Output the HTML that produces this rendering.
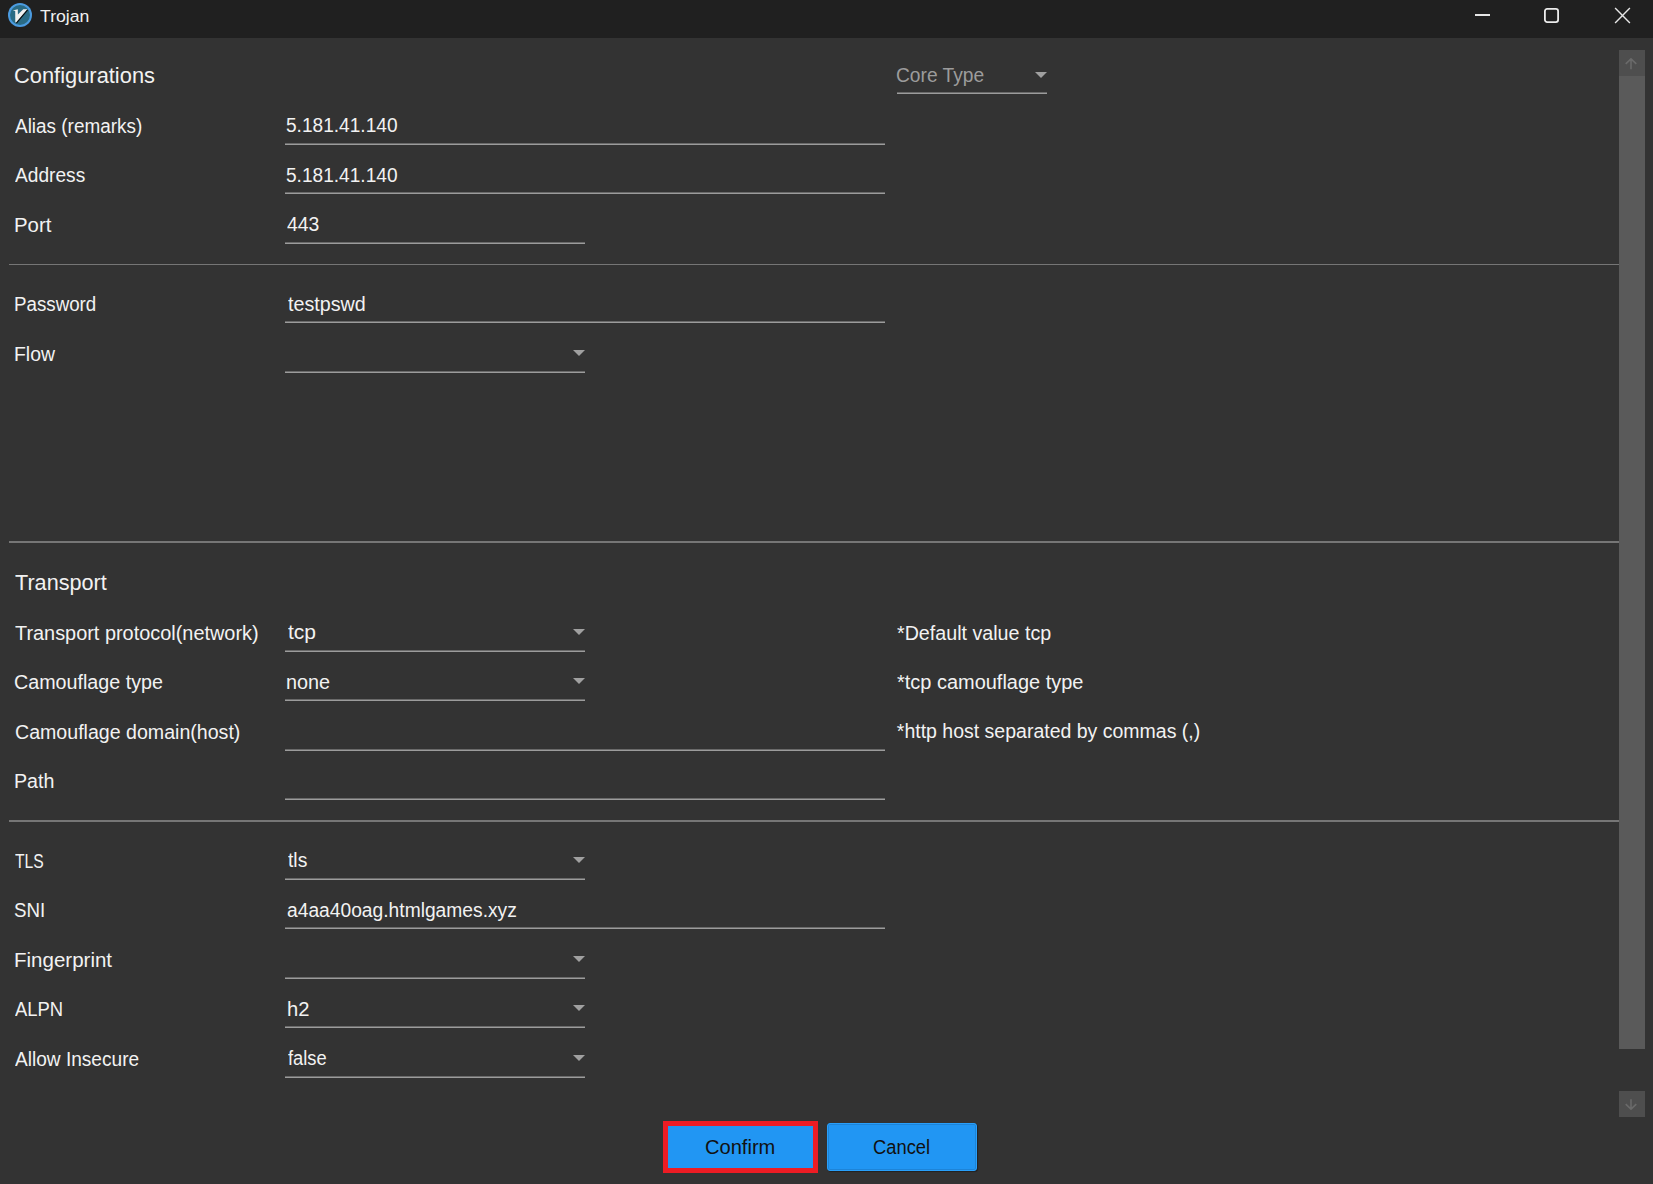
<!DOCTYPE html>
<html><head><meta charset="utf-8"><title>Trojan</title>
<style>
html,body{margin:0;padding:0;}
body{width:1653px;height:1184px;background:#333333;position:relative;overflow:hidden;font-family:"Liberation Sans",sans-serif;}
.t{position:absolute;white-space:nowrap;font-family:"Liberation Sans",sans-serif;}
.r{position:absolute;}
</style></head><body>
<div class="r" style="left:0px;top:0px;width:1653px;height:38px;background:#202020;"></div>
<svg class="r" style="left:0;top:0" width="40" height="38" viewBox="0 0 40 38">
<circle cx="20" cy="15" r="12" fill="#4b9be0"/>
<circle cx="20" cy="15" r="10" fill="#2a6b85"/>
<path d="M12.8 10.5 L17.8 9.2 L17.9 14.6 L23.3 9.2 L27.4 9.2 L16.2 22.6 L15.3 22.3 L15.2 11 Z" fill="#f0f0f0"/>
<path d="M27.6 9.9 L16.4 23.1" stroke="#0c0c0c" stroke-width="1.1"/>
</svg>
<div class="r" style="left:1475px;top:14.4px;width:15px;height:1.4px;background:#e6e6e6;"></div>
<svg class="r" style="left:1543px;top:7px" width="17" height="17" viewBox="0 0 17 17"><rect x="1.9" y="1.9" width="13.2" height="13.2" rx="2.3" fill="none" stroke="#ececec" stroke-width="1.8"/></svg>
<svg class="r" style="left:1612px;top:5px" width="22" height="22" viewBox="0 0 22 22">
<path d="M3.1 3.1L17.9 17.9M17.9 3.1L3.1 17.9" stroke="#e6e6e6" stroke-width="1.4"/></svg>
<div class="r" style="left:1619px;top:50px;width:26px;height:26px;background:#4e4e4e;"></div>
<svg class="r" style="left:1619px;top:50px" width="26" height="26" viewBox="0 0 26 26">
<path d="M12 19.2V9.4M6.7 13.9L12 8.8L17.3 13.9" stroke="#6a6a6a" stroke-width="1.6" fill="none"/></svg>
<div class="r" style="left:1619px;top:76px;width:26px;height:973px;background:#5a5a5a;"></div>
<div class="r" style="left:1619px;top:1091px;width:26px;height:26px;background:#4e4e4e;"></div>
<svg class="r" style="left:1619px;top:1091px" width="26" height="26" viewBox="0 0 26 26">
<path d="M12 8.2V18M6.7 13.1L12 18.2L17.3 13.1" stroke="#6a6a6a" stroke-width="1.6" fill="none"/></svg>
<div class="r" style="left:9px;top:264px;width:1610px;height:1px;background:#767676;"></div>
<div class="r" style="left:9px;top:541px;width:1610px;height:2px;background:#767676;"></div>
<div class="r" style="left:9px;top:820px;width:1610px;height:2px;background:#767676;"></div>
<div class="r" style="left:897px;top:92px;width:150px;height:1px;background:#6a6a6a;"></div>
<div class="r" style="left:897px;top:93px;width:150px;height:1px;background:#9c9c9c;"></div>
<svg class="r" style="left:1035px;top:72px" width="12" height="6" viewBox="0 0 12 6"><path d="M0 0H12L6 6Z" fill="#a0a0a0"/></svg>
<div class="r" style="left:285px;top:143px;width:600px;height:1px;background:#6a6a6a;"></div>
<div class="r" style="left:285px;top:144px;width:600px;height:1px;background:#9c9c9c;"></div>
<div class="r" style="left:285px;top:192px;width:600px;height:1px;background:#6a6a6a;"></div>
<div class="r" style="left:285px;top:193px;width:600px;height:1px;background:#9c9c9c;"></div>
<div class="r" style="left:285px;top:242px;width:300px;height:1px;background:#6a6a6a;"></div>
<div class="r" style="left:285px;top:243px;width:300px;height:1px;background:#9c9c9c;"></div>
<div class="r" style="left:285px;top:321px;width:600px;height:1px;background:#6a6a6a;"></div>
<div class="r" style="left:285px;top:322px;width:600px;height:1px;background:#9c9c9c;"></div>
<div class="r" style="left:285px;top:371px;width:300px;height:1px;background:#6a6a6a;"></div>
<div class="r" style="left:285px;top:372px;width:300px;height:1px;background:#9c9c9c;"></div>
<svg class="r" style="left:573px;top:350px" width="12" height="6" viewBox="0 0 12 6"><path d="M0 0H12L6 6Z" fill="#a0a0a0"/></svg>
<div class="r" style="left:285px;top:650px;width:300px;height:1px;background:#6a6a6a;"></div>
<div class="r" style="left:285px;top:651px;width:300px;height:1px;background:#9c9c9c;"></div>
<svg class="r" style="left:573px;top:629px" width="12" height="6" viewBox="0 0 12 6"><path d="M0 0H12L6 6Z" fill="#a0a0a0"/></svg>
<div class="r" style="left:285px;top:699px;width:300px;height:1px;background:#6a6a6a;"></div>
<div class="r" style="left:285px;top:700px;width:300px;height:1px;background:#9c9c9c;"></div>
<svg class="r" style="left:573px;top:678px" width="12" height="6" viewBox="0 0 12 6"><path d="M0 0H12L6 6Z" fill="#a0a0a0"/></svg>
<div class="r" style="left:285px;top:749px;width:600px;height:1px;background:#6a6a6a;"></div>
<div class="r" style="left:285px;top:750px;width:600px;height:1px;background:#9c9c9c;"></div>
<div class="r" style="left:285px;top:798px;width:600px;height:1px;background:#6a6a6a;"></div>
<div class="r" style="left:285px;top:799px;width:600px;height:1px;background:#9c9c9c;"></div>
<div class="r" style="left:285px;top:878px;width:300px;height:1px;background:#6a6a6a;"></div>
<div class="r" style="left:285px;top:879px;width:300px;height:1px;background:#9c9c9c;"></div>
<svg class="r" style="left:573px;top:857px" width="12" height="6" viewBox="0 0 12 6"><path d="M0 0H12L6 6Z" fill="#a0a0a0"/></svg>
<div class="r" style="left:285px;top:927px;width:600px;height:1px;background:#6a6a6a;"></div>
<div class="r" style="left:285px;top:928px;width:600px;height:1px;background:#9c9c9c;"></div>
<div class="r" style="left:285px;top:977px;width:300px;height:1px;background:#6a6a6a;"></div>
<div class="r" style="left:285px;top:978px;width:300px;height:1px;background:#9c9c9c;"></div>
<svg class="r" style="left:573px;top:956px" width="12" height="6" viewBox="0 0 12 6"><path d="M0 0H12L6 6Z" fill="#a0a0a0"/></svg>
<div class="r" style="left:285px;top:1026px;width:300px;height:1px;background:#6a6a6a;"></div>
<div class="r" style="left:285px;top:1027px;width:300px;height:1px;background:#9c9c9c;"></div>
<svg class="r" style="left:573px;top:1005px" width="12" height="6" viewBox="0 0 12 6"><path d="M0 0H12L6 6Z" fill="#a0a0a0"/></svg>
<div class="r" style="left:285px;top:1076px;width:300px;height:1px;background:#6a6a6a;"></div>
<div class="r" style="left:285px;top:1077px;width:300px;height:1px;background:#9c9c9c;"></div>
<svg class="r" style="left:573px;top:1055px" width="12" height="6" viewBox="0 0 12 6"><path d="M0 0H12L6 6Z" fill="#a0a0a0"/></svg>
<div class="r" style="left:827px;top:1123px;width:150px;height:48px;box-sizing:border-box;background:#2196f3;border:1px solid #29a0fb;border-radius:3px;box-shadow:inset 0 0 0 1px #1d84d8, 1px 1px 1px rgba(0,0,0,0.35)"></div>
<div class="r" style="left:663px;top:1121px;width:155px;height:52px;box-sizing:border-box;background:#2196f3;border:5px solid #ed1c24"></div>
<div class="t" style="left:40.40px;top:7.62px;font-size:17.2px;line-height:17.2px;color:#f0f0f0;transform:scaleX(1.0277);transform-origin:0 0;">Trojan</div>
<div class="t" style="left:14.28px;top:66.03px;font-size:21.5px;line-height:21.5px;color:#f2f2f2;transform:scaleX(1.0168);transform-origin:0 0;">Configurations</div>
<div class="t" style="left:896.22px;top:65.70px;font-size:19.5px;line-height:19.5px;color:#9c9c9c;transform:scaleX(0.9841);transform-origin:0 0;">Core Type</div>
<div class="t" style="left:15.10px;top:116.70px;font-size:19.5px;line-height:19.5px;color:#f2f2f2;transform:scaleX(0.9708);transform-origin:0 0;">Alias (remarks)</div>
<div class="t" style="left:15.10px;top:165.70px;font-size:19.5px;line-height:19.5px;color:#f2f2f2;transform:scaleX(0.9817);transform-origin:0 0;">Address</div>
<div class="t" style="left:14.06px;top:215.70px;font-size:19.5px;line-height:19.5px;color:#f2f2f2;transform:scaleX(1.0438);transform-origin:0 0;">Port</div>
<div class="t" style="left:13.54px;top:294.70px;font-size:19.5px;line-height:19.5px;color:#f2f2f2;transform:scaleX(0.9609);transform-origin:0 0;">Password</div>
<div class="t" style="left:14.30px;top:344.70px;font-size:19.5px;line-height:19.5px;color:#f2f2f2;transform:scaleX(0.9951);transform-origin:0 0;">Flow</div>
<div class="t" style="left:14.70px;top:623.70px;font-size:19.5px;line-height:19.5px;color:#f2f2f2;transform:scaleX(1.0202);transform-origin:0 0;">Transport protocol(network)</div>
<div class="t" style="left:14.49px;top:672.70px;font-size:19.5px;line-height:19.5px;color:#f2f2f2;transform:scaleX(1.0103);transform-origin:0 0;">Camouflage type</div>
<div class="t" style="left:14.50px;top:722.70px;font-size:19.5px;line-height:19.5px;color:#f2f2f2;transform:scaleX(1.0045);transform-origin:0 0;">Camouflage domain(host)</div>
<div class="t" style="left:14.29px;top:771.70px;font-size:19.5px;line-height:19.5px;color:#f2f2f2;transform:scaleX(1.0082);transform-origin:0 0;">Path</div>
<div class="t" style="left:14.90px;top:851.70px;font-size:19.5px;line-height:19.5px;color:#f2f2f2;transform:scaleX(0.8030);transform-origin:0 0;">TLS</div>
<div class="t" style="left:14.34px;top:900.70px;font-size:19.5px;line-height:19.5px;color:#f2f2f2;transform:scaleX(0.9601);transform-origin:0 0;">SNI</div>
<div class="t" style="left:14.05px;top:950.70px;font-size:19.5px;line-height:19.5px;color:#f2f2f2;transform:scaleX(1.0522);transform-origin:0 0;">Fingerprint</div>
<div class="t" style="left:15.30px;top:999.70px;font-size:19.5px;line-height:19.5px;color:#f2f2f2;transform:scaleX(0.9442);transform-origin:0 0;">ALPN</div>
<div class="t" style="left:15.10px;top:1049.70px;font-size:19.5px;line-height:19.5px;color:#f2f2f2;transform:scaleX(0.9786);transform-origin:0 0;">Allow Insecure</div>
<div class="t" style="left:15.30px;top:573.03px;font-size:21.5px;line-height:21.5px;color:#f2f2f2;transform:scaleX(1.0055);transform-origin:0 0;">Transport</div>
<div class="t" style="left:286.42px;top:115.70px;font-size:19.5px;line-height:19.5px;color:#f2f2f2;transform:scaleX(0.9795);transform-origin:0 0;">5.181.41.140</div>
<div class="t" style="left:286.42px;top:165.70px;font-size:19.5px;line-height:19.5px;color:#f2f2f2;transform:scaleX(0.9795);transform-origin:0 0;">5.181.41.140</div>
<div class="t" style="left:287.30px;top:214.70px;font-size:19.5px;line-height:19.5px;color:#f2f2f2;transform:scaleX(0.9941);transform-origin:0 0;">443</div>
<div class="t" style="left:288.00px;top:294.70px;font-size:19.5px;line-height:19.5px;color:#f2f2f2;transform:scaleX(1.0106);transform-origin:0 0;">testpswd</div>
<div class="t" style="left:288.00px;top:622.70px;font-size:19.5px;line-height:19.5px;color:#f2f2f2;transform:scaleX(1.0783);transform-origin:0 0;">tcp</div>
<div class="t" style="left:286.08px;top:672.70px;font-size:19.5px;line-height:19.5px;color:#f2f2f2;transform:scaleX(1.0170);transform-origin:0 0;">none</div>
<div class="t" style="left:288.00px;top:850.70px;font-size:19.5px;line-height:19.5px;color:#f2f2f2;transform:scaleX(0.9899);transform-origin:0 0;">tls</div>
<div class="t" style="left:286.81px;top:900.70px;font-size:19.5px;line-height:19.5px;color:#f2f2f2;transform:scaleX(0.9861);transform-origin:0 0;">a4aa40oag.htmlgames.xyz</div>
<div class="t" style="left:286.76px;top:999.70px;font-size:19.5px;line-height:19.5px;color:#f2f2f2;transform:scaleX(1.0357);transform-origin:0 0;">h2</div>
<div class="t" style="left:288.00px;top:1048.70px;font-size:19.5px;line-height:19.5px;color:#f2f2f2;transform:scaleX(0.9393);transform-origin:0 0;">false</div>
<div class="t" style="left:897.10px;top:623.70px;font-size:19.5px;line-height:19.5px;color:#f2f2f2;transform:scaleX(1.0086);transform-origin:0 0;">*Default value tcp</div>
<div class="t" style="left:897.10px;top:672.70px;font-size:19.5px;line-height:19.5px;color:#f2f2f2;transform:scaleX(1.0237);transform-origin:0 0;">*tcp camouflage type</div>
<div class="t" style="left:896.80px;top:721.70px;font-size:19.5px;line-height:19.5px;color:#f2f2f2;">*http host separated by commas (,)</div>
<div class="t" style="left:704.97px;top:1137.70px;font-size:19.5px;line-height:19.5px;color:#111111;transform:scaleX(1.0303);transform-origin:0 0;">Confirm</div>
<div class="t" style="left:873.26px;top:1137.70px;font-size:19.5px;line-height:19.5px;color:#111111;transform:scaleX(0.9407);transform-origin:0 0;">Cancel</div>
</body></html>
